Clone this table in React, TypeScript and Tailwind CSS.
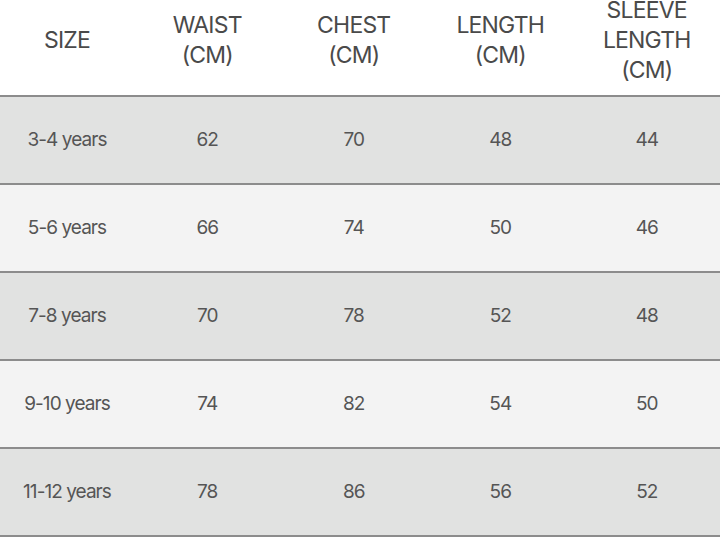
const headers = ["SIZE", "WAIST\n(CM)", "CHEST\n(CM)", "LENGTH\n(CM)", "SLEEVE\nLENGTH\n(CM)"];

const rows = [
  ["3-4 years", "62", "70", "48", "44"],
  ["5-6 years", "66", "74", "50", "46"],
  ["7-8 years", "70", "78", "52", "48"],
  ["9-10 years", "74", "82", "54", "50"],
  ["11-12 years", "78", "86", "56", "52"],
];

export default function App() {
  return (
    <div className="w-[720px] h-[539px] bg-white font-['Inter','Liberation_Sans',sans-serif] overflow-hidden">
      <div className="grid grid-cols-[134px_repeat(4,1fr)] grid-rows-[80px] h-[97px] border-b-2 border-[#8c8c8c] pb-[15px]">
        {headers.map((h) => (
          <div
            key={h}
            className="flex h-[80px] items-center justify-center text-center whitespace-pre-line text-[23px] leading-[30px] tracking-[-0.035em] text-[#4a4a4a]"
          >
            {h}
          </div>
        ))}
      </div>
      {rows.map((r, i) => (
        <div
          key={r[0]}
          className={`grid grid-cols-[134px_repeat(4,1fr)] h-[88px] border-b-2 border-[#8c8c8c] ${
            i % 2 === 0 ? "bg-[#e1e2e1]" : "bg-[#f3f3f3]"
          }`}
        >
          {r.map((c, j) => (
            <div
              key={j}
              className="flex items-center justify-center text-[19px] tracking-[-0.05em] text-[#555555]"
            >
              {c}
            </div>
          ))}
        </div>
      ))}
    </div>
  );
}
